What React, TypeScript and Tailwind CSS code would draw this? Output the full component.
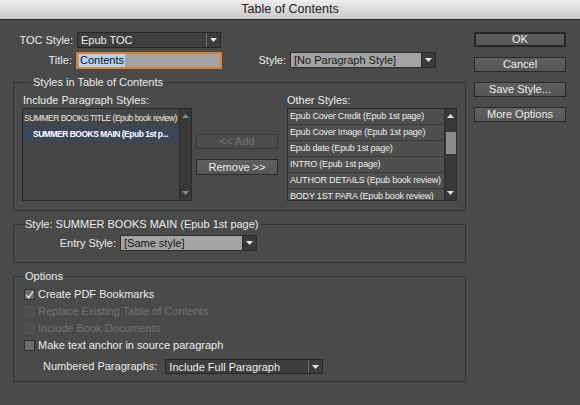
import React from 'react';

const Arrow = ({ dark }: { dark?: boolean }) => (
  <span className={`flex h-full w-[14px] items-center justify-center border-l ${dark ? 'border-[#6a6a6a] bg-[#3c3c3c]' : 'border-[#2a2a2a] bg-[#3a3a3a]'}`}>
    <svg width="7" height="4" viewBox="0 0 7 4">
      <path d="M0 0 H7 L3.5 4 Z" fill="#e6e6e6" />
    </svg>
  </span>
);

function Select({ value, light, className }: { value: string; light?: boolean; className: string }) {
  return (
    <div
      className={`flex items-stretch border ${className} ${
        light ? 'border-[#2c2c2c] bg-[#a4a4a4] text-[#161616]' : 'border-[#262626] bg-[#3e3e3e] text-[#eeeeee]'
      }`}
    >
      <span className="flex-1 truncate pl-[3px] leading-[14px]">{value}</span>
      <Arrow dark={!light} />
    </div>
  );
}

function Button({ label, primary, disabled, className = '' }: { label: string; primary?: boolean; disabled?: boolean; className?: string }) {
  return (
    <div
      className={`flex items-center justify-center leading-none ${className} ${
        disabled
          ? 'border border-[#3a3a3a] bg-[#4c4c4c] text-[#727272]'
          : primary
          ? 'border-2 border-[#262626] bg-gradient-to-b from-[#606060] to-[#555555] text-[#f0f0f0]'
          : 'border border-[#2a2a2a] bg-gradient-to-b from-[#606060] to-[#555555] text-[#ececec]'
      }`}
    >
      {label}
    </div>
  );
}

function Check({ label, checked, disabled }: { label: string; checked?: boolean; disabled?: boolean }) {
  return (
    <div className="flex h-[17px] items-center pl-[10px]">
      <span
        className={`flex h-[11px] w-[11px] items-center justify-center border ${
          disabled ? 'border-[#555555] bg-[#4e4e4e]' : 'border-[#2e2e2e] bg-[#6c6c6c]'
        }`}
      >
        {checked && (
          <svg width="10" height="10" viewBox="0 0 10 10">
            <path d="M1.5 5.2 L4 8 L8.8 1.2" fill="none" stroke="#f2f2f2" strokeWidth="1.3" />
          </svg>
        )}
      </span>
      <span className={`ml-[3px] ${disabled ? 'text-[#717171]' : 'text-[#ececec]'}`}>{label}</span>
    </div>
  );
}

const legend = 'ml-[9px] px-[2px] leading-[14px] text-[#ececec]';

const others = [
  'Epub Cover Credit (Epub 1st page)',
  'Epub Cover Image (Epub 1st page)',
  'Epub date (Epub 1st page)',
  'INTRO (Epub 1st page)',
  'AUTHOR DETAILS (Epub book review)',
  'BODY 1ST PARA (Epub book review)',
];

function Scrollbar({ thumb }: { thumb?: boolean }) {
  return (
    <div className="flex w-[12px] shrink-0 flex-col items-center border-l border-[#2c2c2c] bg-[#383838]">
      <svg className="mt-[5px]" width="7" height="4" viewBox="0 0 7 4">
        <path d="M0 4 H7 L3.5 0 Z" fill={thumb ? '#e0e0e0' : '#8a8a8a'} />
      </svg>
      <div className="flex-1">
        {thumb && <div className="mt-[14px] h-[22px] w-[10px] bg-[#8c8c8c]" />}
      </div>
      <svg className="mb-[5px]" width="7" height="4" viewBox="0 0 7 4">
        <path d="M0 0 H7 L3.5 4 Z" fill={thumb ? '#e0e0e0' : '#8a8a8a'} />
      </svg>
    </div>
  );
}

export default function App() {
  return (
    <div className="h-[405px] w-[580px] overflow-hidden bg-[#4a4a4a] font-['Liberation_Sans',sans-serif] text-[11px] text-[#ececec]">
      <div className="flex h-[20px] items-center justify-center border-b border-[#2a2a2a] bg-gradient-to-b from-[#ededed] to-[#c9c9c9] text-[12.5px] text-[#202020]">
        Table of Contents
      </div>

      <div className="flex pl-[13px]">
        <div className="w-[453px] pt-[12px]">
          <div className="flex h-[16px] items-center">
            <span className="w-[60px] text-right">TOC Style:</span>
            <Select value="Epub TOC" className="ml-[4px] h-[16px] w-[144px]" />
          </div>

          <div className="mt-[4px] flex h-[16px] items-center">
            <span className="w-[59px] text-right">Title:</span>
            <div className="ml-[4px] flex h-[17px] w-[146px] items-center border-2 border-[#d9822b] bg-[#a4a4a4] pl-[1px]">
              <span className="bg-[#b7d2f0] px-[1px] leading-[13px] text-[#111111]">Contents</span>
            </div>
            <span className="w-[64px] text-right">Style:</span>
            <Select value="[No Paragraph Style]" light className="ml-[4px] h-[16px] w-[146px]" />
          </div>

          <fieldset className="mt-[7px] border border-[#363636] pb-[9px] pl-[8px]">
            <legend className={legend}>Styles in Table of Contents</legend>
            <div className="mt-[4px] flex leading-[14px]">
              <span className="ml-[1px] w-[264px]">Include Paragraph Styles:</span>
              <span>Other Styles:</span>
            </div>
            <div className="mt-[1px] flex">
              <div className="flex h-[93px] w-[170px] border border-[#2a2a2a] bg-[#454545]">
                <div className="min-w-0 flex-1 overflow-hidden whitespace-nowrap pt-[1px] text-[8.5px] tracking-[-0.5px] text-[#e8e8e8]">
                  <div className="flex h-[16px] items-center pl-[1px]">SUMMER BOOKS TITLE (Epub book review)</div>
                  <div className="flex h-[16px] items-center bg-[#3b4658] pl-[10px] font-bold text-white">
                    SUMMER BOOKS MAIN (Epub 1st p...
                  </div>
                </div>
                <Scrollbar />
              </div>

              <div className="ml-[4px] w-[82px]">
                <Button label="<< Add" disabled className="mt-[26px] h-[15px]" />
                <Button label="Remove >>" className="mt-[10px] h-[16px]" />
              </div>

              <div className="ml-[9px] flex h-[93px] w-[170px] border border-[#2a2a2a] bg-[#4b4b4b]">
                <div className="min-w-0 flex-1 overflow-hidden whitespace-nowrap text-[9px] tracking-[-0.2px] text-[#ececec]">
                  {others.map((o) => (
                    <div key={o} className="flex h-[16px] items-center border-b border-[#3a3a3a] bg-[#4f4f4f] pl-[2px]">
                      {o}
                    </div>
                  ))}
                </div>
                <Scrollbar thumb />
              </div>
            </div>
          </fieldset>

          <fieldset className="mt-[6px] border border-[#363636] pb-[11px]">
            <legend className={legend}>Style: SUMMER BOOKS MAIN (Epub 1st page)</legend>
            <div className="mt-[4px] flex h-[16px] items-center">
              <span className="w-[102px] text-right">Entry Style:</span>
              <Select value="[Same style]" light className="ml-[4px] h-[16px] w-[137px]" />
            </div>
          </fieldset>

          <fieldset className="mt-[6px] border border-[#363636] pb-[7px]">
            <legend className={legend}>Options</legend>
            <div className="mt-[3px]">
              <Check label="Create PDF Bookmarks" checked />
              <Check label="Replace Existing Table of Contents" disabled />
              <Check label="Include Book Documents" disabled />
              <Check label="Make text anchor in source paragraph" />
            </div>
            <div className="mt-[5px] flex h-[15px] items-center pl-[29px]">
              <span>Numbered Paragraphs:</span>
              <Select value="Include Full Paragraph" className="ml-[8px] h-[15px] w-[158px]" />
            </div>
          </fieldset>
        </div>

        <div className="ml-[8px] w-[92px] pt-[12px]">
          <Button label="OK" primary className="h-[15px]" />
          <Button label="Cancel" className="mt-[10px] h-[15px]" />
          <Button label="Save Style..." className="mt-[10px] h-[15px]" />
          <Button label="More Options" className="mt-[10px] h-[15px]" />
        </div>
      </div>
    </div>
  );
}
